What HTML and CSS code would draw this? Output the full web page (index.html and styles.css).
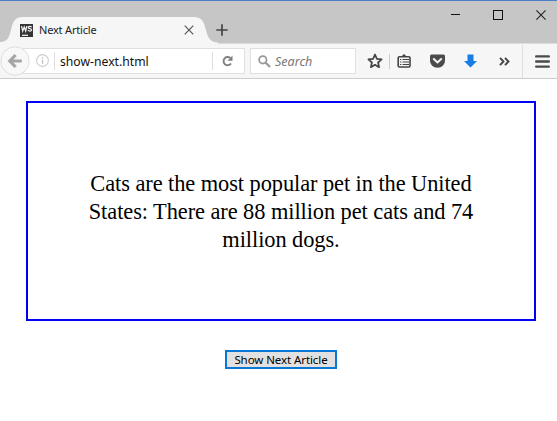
FILE: index.html
```html
<!DOCTYPE html>
<html lang="en">
<head>
<meta charset="utf-8">
<title>Next Article</title>
<link rel="stylesheet" href="styles.css">
</head>
<body>
<header class="titlebar">
  <div class="tab">
    <svg class="tab-shape" width="218" height="27" viewBox="0 0 218 27"><path d="M0 25C8 25 9 20 11 13C13 4 15 0 23 0H194C202 0 204 5 206 13C208 21 210 25 218 25.500V27H0Z" fill="#f6f6f6"/></svg>
    <svg class="favicon" width="13" height="13" viewBox="0 0 13 13"><rect width="13" height="13" fill="#343434"/><path d="M1.500 2.200L2.700 7L4.200 3L5.700 7L6.800 2.200M11.600 3.200C10.500 1.800 8 2.200 8.300 3.600C8.600 5 11.700 4.200 11.600 5.900C11.400 7.500 8.800 7.300 7.900 6.200" fill="none" stroke="#eee" stroke-width="1.3"/><path d="M2 11.300H8" stroke="#fff" stroke-width="1.2"/></svg>
    <span class="tab-title">Next Article</span>
    <svg class="tab-close" width="10" height="10" viewBox="0 0 10 10"><path d="M.7.7L9.300 9.300M9.300.7L.7 9.300" stroke="#555" stroke-width="1.2"/></svg>
  </div>
  <svg class="new-tab" width="12" height="12" viewBox="0 0 12 12"><path d="M6 .3V11.700M.3 6H11.700" stroke="#444" stroke-width="1.7"/></svg>
  <div class="window-controls">
    <svg width="9" height="10" viewBox="0 0 9 10"><path d="M0 4.500H9" stroke="#111"/></svg>
    <svg width="10" height="10" viewBox="0 0 10 10"><rect x=".5" y=".5" width="9" height="9" fill="none" stroke="#111"/></svg>
    <svg width="10" height="10" viewBox="0 0 10 10"><path d="M.4.4L9.600 9.600M9.600.4L.4 9.600" stroke="#222" stroke-width="1.1"/></svg>
  </div>
</header>
<nav class="toolbar">
  <svg class="back" width="30" height="30" viewBox="0 0 30 30"><circle cx="15" cy="15" r="14.2" fill="#f8f8f8" stroke="#dedede"/><path d="M21.800 15H11M15.600 9L9.800 15L15.600 21" fill="none" stroke="#a6a6a6" stroke-width="3.2"/></svg>
  <div class="address">
    <svg class="info" width="13" height="13" viewBox="0 0 13 13"><circle cx="6.5" cy="6.5" r="5.9" fill="none" stroke="#ccc" stroke-width="1.1"/><path d="M6.500 5.500V10M6.500 3V4.500" stroke="#c3c3c3" stroke-width="1.3"/></svg>
    <span class="url">show-next.html</span>
    <svg class="reload" width="11" height="12" viewBox="0 0 11 12"><path d="M9 8.500A4.100 4.100 0 1 1 8.300 3" fill="none" stroke="#808080" stroke-width="1.9"/><path d="M10.500.6V5.700H5.500Z" fill="#808080"/></svg>
  </div>
  <div class="search">
    <svg width="13" height="13" viewBox="0 0 13 13"><circle cx="4.8" cy="4.8" r="3.7" fill="none" stroke="#999" stroke-width="1.8"/><path d="M7.500 7.500L12 12" stroke="#999" stroke-width="2.2"/></svg>
    <span>Search</span>
  </div>
  <svg class="star" width="16" height="16" viewBox="0 0 16 16"><path d="M8 1.500L9.900 5.800L14.600 6.300L11.100 9.500L12.100 14.200L8 11.800L3.900 14.200L4.900 9.500L1.400 6.300L6.100 5.800Z" fill="none" stroke="#444" stroke-width="1.7" stroke-linejoin="round"/></svg>
  <i class="divider"></i>
  <svg class="list" width="14" height="14" viewBox="0 0 14 14"><path d="M4 2.700L7 0L10 2.700Z" fill="#444"/><rect x="1.2" y="2.8" width="11.8" height="10.2" rx="1.2" fill="none" stroke="#444" stroke-width="1.6"/><path d="M3 5.500H4.300M5.500 5.500H12M3 8H4.300M5.500 8H12M3 10.500H4.300M5.500 10.500H12" stroke="#444" stroke-width="1.2"/></svg>
  <svg class="pocket" width="15" height="14" viewBox="0 0 15 14"><path d="M1.500.5H13.500Q15 .5 15 2V6C15 10.800 11.700 13.700 7.500 13.700S0 10.800 0 6V2Q0 .5 1.500.5Z" fill="#4b4b4b"/><path d="M3.800 5L7.500 8.400L11.200 5" fill="none" stroke="#f6f6f6" stroke-width="2" stroke-linecap="round"/></svg>
  <svg class="download" width="13" height="14" viewBox="0 0 13 14"><path d="M3.500 .5H9.500V7H13L6.500 13.500L0 7H3.500Z" fill="#177ee6"/></svg>
  <svg class="more" width="11" height="9" viewBox="0 0 11 9"><path d="M1 .8L4.500 4.500L1 8.200M6 .8L9.500 4.500L6 8.200" fill="none" stroke="#444" stroke-width="1.9"/></svg>
  <i class="menu-divider"></i>
  <svg class="menu" width="15" height="13" viewBox="0 0 15 13"><path d="M1.200 1.400H13.800M1.200 6.500H13.800M1.200 11.600H13.800" stroke="#4b4b4b" stroke-width="2.4" stroke-linecap="round"/></svg>
</nav>
<main>
  <article><p>Cats are the most popular pet in the United<br>States: There are 88 million pet cats and 74<br>million dogs.</p></article>
  <button type="button">Show Next Article</button>
</main>
</body>
</html>
```
FILE: styles.css
```css
* { box-sizing: border-box; }
body { margin: 0; height: 421px; overflow: hidden; background: #fff; font-family: "Noto Sans", sans-serif; }
svg { display: block; flex: none; }
.titlebar { position: relative; z-index: 1; height: 43px; display: flex; background: #c6c6c6; border-top: 1px solid #4d7fc4; }
.tab { position: relative; width: 216px; height: 26px; margin-top: 16px; display: flex; align-items: center; flex: none; }
.tab-shape { position: absolute; left: 0; top: 0; }
.favicon { position: relative; margin-left: 20px; }
.tab-title { position: relative; margin-left: 6px; width: 145px; font-size: 11px; line-height: 16px; letter-spacing: -0.18px; color: #222; white-space: nowrap; }
.tab-close { position: relative; }
.new-tab { margin: 23px 0 0; }
.window-controls { display: flex; gap: 33px; margin: 9px 11px 0 auto; }
.toolbar { height: 36px; display: flex; align-items: center; background: #f6f6f6; border-top: 1px solid #dcdcdc; border-bottom: 1px solid #ccc; }
.back { position: relative; z-index: 1; margin-top: -1px; }
.address { width: 222px; height: 26px; margin-left: -7px; padding-left: 12px; display: flex; align-items: center; background: #fff; border: 1px solid #dfdfdf; }
.info { margin-top: -1px; }
.url { margin-left: 5px; padding: 1px 0 0 5px; width: 159px; height: 18px; border-left: 1px solid #ddd; border-right: 1px solid #ddd; font-size: 12.2px; line-height: 17px; color: #111; }
.reload { margin-left: 9px; }
.search { width: 106px; height: 26px; margin-left: 5px; padding-left: 7px; display: flex; align-items: center; gap: 4px; background: #fff; border: 1px solid #dfdfdf; font-size: 12.5px; font-style: italic; color: #777; }
.star { margin-left: 11px; }
.divider { width: 1px; height: 15px; margin-left: 6px; background: #ccc; }
.list { margin-left: 7px; }
.pocket { margin-left: 19px; }
.download { margin-left: 19px; }
.more { margin-left: 22px; }
.menu-divider { width: 1px; height: 33px; margin-left: 12px; background: #dedede; }
.menu { margin-left: 12px; }
main { display: flex; flex-direction: column; align-items: center; padding: 22px 0 0 5px; }
article { width: 510px; height: 220px; border: 2px solid #0000f5; display: flex; align-items: center; justify-content: center; }
p { margin: 0; padding-top: 2px; font: 22.4px/28px "Liberation Serif", serif; letter-spacing: -0.07px; text-align: center; white-space: nowrap; color: #000; }
button { width: 112px; height: 19px; margin-top: 29px; padding: 0; border: 2px solid #0878d7; background: #e1e1e1; font: 11.5px/15px "Noto Sans", sans-serif; letter-spacing: -0.08px; color: #000; white-space: nowrap; }
```
